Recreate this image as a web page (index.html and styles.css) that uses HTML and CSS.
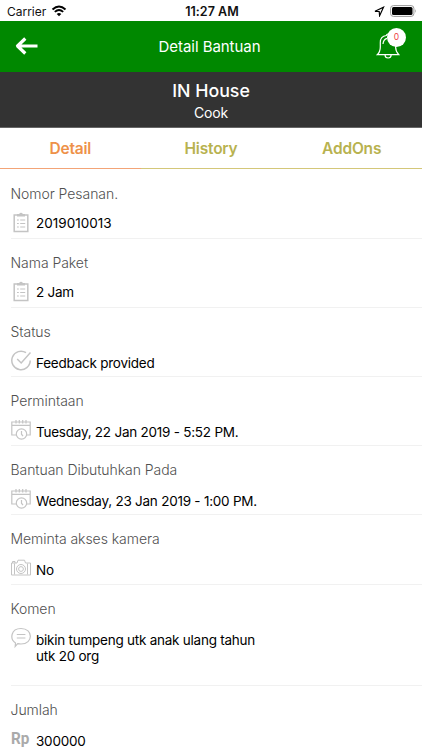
FILE: index.html
```html
<!DOCTYPE html>
<html lang="id">
<head>
<meta charset="utf-8">
<title>Detail Bantuan</title>
<link rel="stylesheet" href="styles.css">
</head>
<body>
<svg width="0" height="0" class="defs">
  <symbol id="clipboard" viewBox="0 0 20 22">
    <path d="M3.200 4h13.600v16.500h-13.600z" fill="none" stroke="currentColor" stroke-width="1.500"/>
    <path d="M6 5.500V3h2.200a1.900 1.900 0 0 1 3.600 0H14v2.500z" fill="currentColor"/>
    <path d="M6 9h1.800M9.200 9h5M6 12.500h1.800M9.200 12.500h5M6 16h1.800M9.200 16h5" stroke="currentColor" stroke-width="1.200"/>
  </symbol>
  <symbol id="calendar" viewBox="0 0 20 22">
    <path d="M6 16H.8V3h18.400v13H15M.8 6.300h18.400M5 1v3.500M8.300 1v3.500M11.700 1v3.500M15 1v3.500" fill="none" stroke="currentColor" stroke-width="1.200"/>
    <circle cx="10.500" cy="15" r="5.200" fill="#fff" stroke="currentColor" stroke-width="1.200"/>
    <path d="M10.500 12v3.200l1.500 2" fill="none" stroke="currentColor" stroke-width="1.200"/>
  </symbol>
</svg>
<div class="status">
  <div class="carrier"><span>Carrier</span>
    <svg width="16" height="12" viewBox="0 0 16 12"><path d="M1.500 4.500Q8-1.500 14.500 4.500M3.800 6.900Q8 3.200 12.200 6.900" fill="none" stroke="#000" stroke-width="1.900"/><path d="M5.700 9Q8 7 10.300 9L8 11.300z"/></svg>
  </div>
  <div class="time">11:27 AM</div>
  <div class="power">
    <svg width="11" height="11" viewBox="0 0 11 11"><path d="M1 5.300 9.500 1.200 5.600 9.700 5.200 5.500z" fill="none" stroke="#000" stroke-width="1.200"/></svg>
    <svg width="27" height="12" viewBox="0 0 27 12"><rect x=".6" y=".6" width="23.300" height="10.800" rx="2.800" fill="#fff" stroke="#999"/><rect x="2" y="2" width="20.500" height="8" rx="1.500"/><path d="M25 4q1.600 2 0 4z" fill="#999"/></svg>
  </div>
</div>
<header class="bar">
  <svg class="back" width="24" height="20" viewBox="0 0 24 20"><path d="M22.500 10H3M10.300 2.500 2.500 10l7.800 7.500" fill="none" stroke="#fff" stroke-width="3.200" stroke-linejoin="round"/></svg>
  <h1>Detail Bantuan</h1>
  <div class="bell">
    <svg width="24" height="28" viewBox="0 0 24 28"><path d="M1.300 22.700c2.300-2.200 3-3.500 3-7.700V10.500c0-3.500 2.200-6.500 6-7 .3-2 3.500-2 3.800 0 3.800.6 5.500 3.500 5.500 7V15c0 4.200 1 5.500 3.200 7.700zM9 23c.2 4 6 4 6.200 0M7 12c.2-3.300 1.500-5 4-5.700" fill="none" stroke="#fff" stroke-width="1.200"/></svg>
    <span class="badge">0</span>
  </div>
</header>
<section class="title"><h2>IN House</h2><p>Cook</p></section>
<nav class="tabs"><a class="active">Detail</a><a>History</a><a>AddOns</a></nav>
<main>
  <section class="row raised"><h3>Nomor Pesanan.</h3><div class="value"><svg class="icon"><use href="#clipboard"/></svg><p class="num">2019010013</p></div></section>
  <section class="row raised"><h3>Nama Paket</h3><div class="value"><svg class="icon"><use href="#clipboard"/></svg><p>2 Jam</p></div></section>
  <section class="row"><h3>Status</h3><div class="value"><svg class="icon" viewBox="0 0 20 22"><path d="M15 2.700A9.200 9.200 0 1 0 19.200 10.500M6.200 9l4 4 9.300-10.500" fill="none" stroke="currentColor" stroke-width="1.500"/></svg><p>Feedback provided</p></div></section>
  <section class="row"><h3>Permintaan</h3><div class="value"><svg class="icon"><use href="#calendar"/></svg><p>Tuesday, 22 Jan 2019 - 5:52 PM.</p></div></section>
  <section class="row"><h3>Bantuan Dibutuhkan Pada</h3><div class="value"><svg class="icon"><use href="#calendar"/></svg><p>Wednesday, 23 Jan 2019 - 1:00 PM.</p></div></section>
  <section class="row"><h3>Meminta akses kamera</h3><div class="value"><svg class="icon" viewBox="0 0 20 22"><g fill="none" stroke="currentColor"><path d="M.5 6H6l1-2.800h6.500l1 2.800h5v12H.5zM1.500 6V4.500H4V6M3.500 6.500v11M16.500 6.500v11"/><circle cx="10" cy="12" r="4.500"/><circle cx="10" cy="12" r="2.400"/></g></svg><p>No</p></div></section>
  <section class="row comment"><h3>Komen</h3><div class="value"><svg class="icon" viewBox="0 0 20 22"><path d="M4.500 16C-1.500 12-.2 1.500 10 1.500c12.500 0 12.500 15.500 0 15.500-1.500 0-2.300-.2-3.300-.4L4.200 19.500zM5.800 7.500h8.600M5.800 11h8.600" fill="none" stroke="currentColor" stroke-width="1.200"/></svg><p>bikin tumpeng utk anak ulang tahun<br>utk 20 org</p></div></section>
  <section class="row"><h3>Jumlah</h3><div class="value"><span class="rp">Rp</span><p>300000</p></div></section>
</main>
</body>
</html>
```
FILE: styles.css
```css
* { box-sizing: border-box; margin: 0; }
body { height: 750px; overflow: hidden; background: #fff; color: #111; font-family: Inter, "Liberation Sans", sans-serif; font-size: 13.5px; }
.defs { position: absolute; }
.status { height: 21px; display: grid; grid-template-columns: 1fr auto 1fr; align-items: center; padding: 1px 5px 0 7px; font-size: 12px; }
.carrier { display: flex; align-items: center; gap: 5px; letter-spacing: -.02px; }
.time { font-weight: 600; font-size: 12.500px; letter-spacing: .05px; }
.power { display: flex; align-items: center; justify-content: flex-end; gap: 5px; }
.bar { height: 50.500px; display: grid; grid-template-columns: 40px 1fr 40px; align-items: center; padding: 0 8px 0 15px; background: #008800; color: #fff; }
.bar h1 { text-align: center; font-size: 15px; font-weight: 400; letter-spacing: -.05px; padding-right: 10px; }
.bell { position: relative; height: 28px; margin-left: 2px; }
.badge { position: absolute; left: 11px; top: -4px; width: 19px; height: 19px; border-radius: 50%; background: #fff; color: #e44; font-size: 8.500px; line-height: 19px; text-align: center; }
.title { height: 56px; padding-top: 7.500px; background: #333; color: #fff; text-align: center; border-bottom: 1px solid #666; }
.title h2 { font-size: 17.800px; line-height: 23px; font-weight: 500; }
.title p { font-size: 14px; line-height: 21px; letter-spacing: -.2px; }
.tabs { display: grid; grid-template-columns: repeat(3, 1fr); grid-template-rows: 41.500px; height: 41.500px; }
.tabs a { border-bottom: 1.500px solid #d4c779; color: #b8b24f; text-align: center; font-weight: 600; font-size: 15.500px; letter-spacing: -.2px; line-height: 42px; }
.tabs .active { color: #ee9149; border-color: #f3a477; }
main { padding: .500px 0 0 10.500px; }
.row { height: 69.200px; padding-top: 14px; border-bottom: 1px solid #f1f1f1; }
.row h3 { height: 20px; line-height: 20px; font-size: 14px; font-weight: 300; color: #505050; letter-spacing: -.05px; }
.value { display: flex; align-items: flex-start; gap: 5.500px; padding-top: 6px; }
.icon { width: 20px; height: 22px; color: #c4c4c4; flex: none; margin-top: 2px; }
.value p { padding-top: 7px; line-height: 16px; color: #000; letter-spacing: -.24px; }
.value .num { letter-spacing: .02px; }
.raised .icon { margin-top: 1px; }
.raised p { padding-top: 5px; }
.comment { height: 101px; }
.rp { width: 20px; font: 700 17px/24px Roboto, sans-serif; transform: scaleX(.9); transform-origin: left; color: #aaa; }
```
